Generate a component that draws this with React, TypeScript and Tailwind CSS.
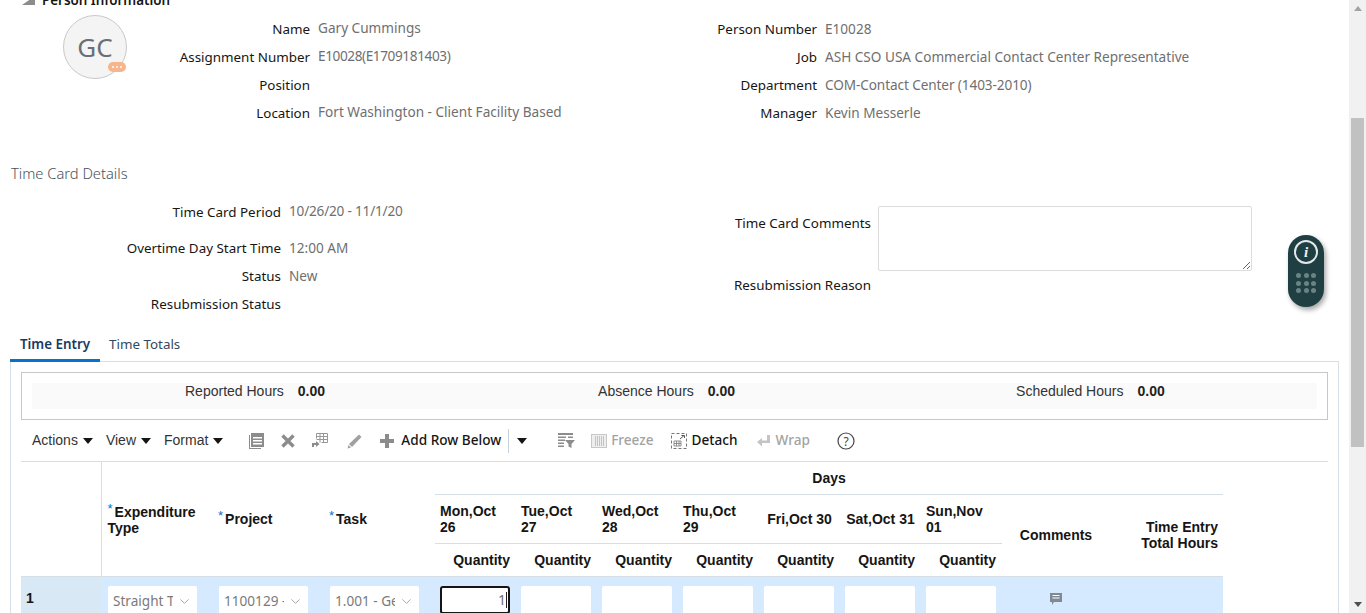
import { ChevronDown } from 'lucide-react';

const ui = { fontFamily: '"Noto Sans", "Open Sans", sans-serif' };
const arial = { fontFamily: '"Liberation Sans", Arial, sans-serif' };

const personRows = [
  ['Name', 'Gary Cummings', '', 'Person Number', 'E10028', ''],
  ['Assignment Number', 'E10028(E1709181403)', 'tracking-[-0.4px]', 'Job', 'ASH CSO USA Commercial Contact Center Representative', ''],
  ['Position', '', '', 'Department', 'COM-Contact Center (1403-2010)', 'tracking-[-0.1px]'],
  ['Location', 'Fort Washington - Client Facility Based', '', 'Manager', 'Kevin Messerle', ''],
];

const days = [
  ['Mon,Oct', '26'],
  ['Tue,Oct', '27'],
  ['Wed,Oct', '28'],
  ['Thu,Oct', '29'],
  ['Fri,Oct 30'],
  ['Sat,Oct 31'],
  ['Sun,Nov', '01'],
];

function Caret({ className = '' }: { className?: string }) {
  return (
    <svg width="10" height="6" viewBox="0 0 10 6" className={className}>
      <path d="M0 0h10L5 6z" fill="#161513" />
    </svg>
  );
}

function Menu({ label }: { label: string }) {
  return (
    <span className="flex items-center gap-[5px] text-[14px] text-[#333]" style={arial}>
      {label}
      <Caret />
    </span>
  );
}

function Pair({ label, value }: { label: string; value: string }) {
  return (
    <span className="flex items-center gap-[14px] text-[14px] text-[#333]" style={arial}>
      {label}
      <b className="text-[#222]">{value}</b>
    </span>
  );
}

function Star() {
  return <span className="relative -top-[4px] mr-[2px] text-[13px] font-normal leading-none text-[#0572ce]">*</span>;
}

function SelectBox({ text }: { text: string }) {
  return (
    <div className="flex h-[32px] w-[89px] items-center justify-between overflow-hidden rounded-[2px] bg-white pl-[5px] pr-[5px] text-[13.6px] font-normal text-[#7a7a7a]" style={ui}>
      <span className="w-[60px] overflow-hidden whitespace-nowrap">{text}</span>
      <ChevronDown size={15} strokeWidth={1.2} className="shrink-0 text-[#8a8a8a]" />
    </div>
  );
}

function ToolbarIcons() {
  return (
    <div className="ml-[25px] flex items-center">
      <svg width="16" height="16" viewBox="0 0 16 16" className="mr-[16px]">
        <path d="M1 2h1v13h11v1H1z M3 0h13v14H3z" fill="#8c8c8c" />
        <path d="M5 4h9v1.4H5zM5 7h9v1.4H5zM5 10h9v1.4H5z" fill="#fff" />
      </svg>
      <svg width="16" height="16" viewBox="0 0 16 16" className="mr-[15px]">
        <path d="M2.5 2.500l11 11M13.500 2.500l-11 11" stroke="#8c8c8c" strokeWidth="3.400" />
      </svg>
      <svg width="17" height="17" viewBox="0 0 17 17" className="mr-[18px]">
        <path d="M5.500 1.500h11v9h-6M5.500 1.500v5M9 1.500v9M12.500 1.500v9M5.500 4.500h11M5.500 7.500h11" stroke="#999" strokeWidth="1" fill="none" />
        <path d="M1 15v-4h4v-2l3.500 3L5 15v-2H3v2z" fill="#8c8c8c" />
      </svg>
      <svg width="18" height="18" viewBox="0 0 18 18" className="mr-[16px]">
        <path d="M3 12L13 2.500l2.500 2.500L6 15z" fill="#a0a0a0" />
        <path d="M1.500 16.500l1-3.500 2.500 2.500z" fill="#a0a0a0" />
      </svg>
      <svg width="14" height="14" viewBox="0 0 14 14" className="mr-[7px]">
        <path d="M5 0h4v5h5v4H9v5H5V9H0V5h5z" fill="#8c8c8c" />
      </svg>
      <span className="text-[13.6px] font-medium text-[#161513]" style={ui}>Add Row Below</span>
      <span className="ml-[7px] h-[24px] w-px bg-[#c9d3dc]" />
      <Caret className="ml-[8px] mr-[31px]" />
      <svg width="17" height="15" viewBox="0 0 17 15" className="mr-[16px]">
        <path d="M0 0h15v2H0zM0 3.500h8v1.500H0zM0 6.500h7v1.500H0zM0 9.500h6v1.500H0zM0 12.500h6V14H0zM10 3.500h5v1.500h-5z" fill="#8c8c8c" />
        <path d="M7 7h10l-3.500 4v4l-3-1.500V11z" fill="#8c8c8c" />
      </svg>
      <svg width="16" height="14" viewBox="0 0 16 14" className="mr-[4px]">
        <rect x="0.500" y="0.500" width="15" height="13" fill="#eee" stroke="#c8c8c8" />
        <path d="M4.500 2v10M6.500 2v10M8.500 2v10M10.500 2v10M12.500 2v10" stroke="#c4c4c4" />
      </svg>
      <span className="text-[13.6px] font-medium text-[#a3a3a3]" style={ui}>Freeze</span>
      <svg width="16" height="16" viewBox="0 0 16 16" className="ml-[17px] mr-[5px]">
        <rect x="0.500" y="0.500" width="15" height="15" fill="none" stroke="#777" strokeDasharray="3 2" />
        <path d="M3 8h7v5H3zM3 10.500h7M5.500 8v5M8 8v5" fill="none" stroke="#777" strokeWidth="0.800" />
        <path d="M9 6l4-3.500M10.500 2.500H13.500V5" fill="none" stroke="#555" />
      </svg>
      <span className="text-[13.6px] font-medium text-[#161513]" style={ui}>Detach</span>
      <svg width="14" height="14" viewBox="0 0 14 14" className="ml-[19px] mr-[5px]">
        <path d="M10 1h3v8H5v3.500L0 8l5-4v2.500h5z" fill="#c4c4c4" />
      </svg>
      <span className="text-[13.6px] font-medium text-[#a3a3a3]" style={ui}>Wrap</span>
      <svg width="18" height="18" viewBox="0 0 18 18" className="ml-[27px]">
        <circle cx="9" cy="9" r="8" fill="none" stroke="#444" strokeWidth="1.200" />
        <text x="9" y="13.500" textAnchor="middle" fontSize="12" fill="#444" style={ui}>?</text>
      </svg>
    </div>
  );
}

function FloatingHelp() {
  return (
    <div className="absolute left-[1288px] top-[235px] flex h-[72px] w-[36px] flex-col items-center rounded-full bg-[#1f3f43] pt-[5px] shadow-[2px_3px_5px_rgba(0,0,0,0.35)]">
      <div className="flex h-[24px] w-[24px] items-center justify-center rounded-full border-2 border-[#e4e8e8] text-[15px] font-bold italic leading-none text-[#f0f2f2]" style={{ fontFamily: '"Liberation Serif", serif' }}>
        i
      </div>
      <div className="mt-[9px] grid grid-cols-3 gap-x-[2.500px] gap-y-[2.500px]">
        {Array.from({ length: 9 }).map((_, i) => (
          <span key={i} className="h-[5px] w-[5px] rounded-full bg-[#6b8285]" />
        ))}
      </div>
    </div>
  );
}

function Scrollbar() {
  return (
    <div className="flex w-[17px] shrink-0 flex-col items-center bg-[#f1f1f1]">
      <div className="flex h-[17px] w-full shrink-0 items-center justify-center">
        <span className="h-0 w-0 border-x-[4px] border-b-[5px] border-x-transparent border-b-[#a3a3a3]" />
      </div>
      <div className="mt-[101px] h-[329px] w-[13px] shrink-0 bg-[#c1c1c1]" />
      <div className="mt-auto flex h-[17px] w-full shrink-0 items-center justify-center">
        <span className="h-0 w-0 border-x-[4px] border-t-[5px] border-x-transparent border-t-[#505050]" />
      </div>
    </div>
  );
}

export default function App() {
  return (
    <div className="relative flex h-[613px] w-[1366px] overflow-hidden bg-white">
      <div className="w-[1349px] shrink-0">
        {/* Person information */}
        <div className="-mt-[11px] flex h-[22px] items-center pl-[22px] text-[13.4px] font-semibold text-[#161513]" style={ui}>
          <span className="mr-[7px] h-0 w-0 border-b-[9px] border-l-[13px] border-b-[#8c8c8c] border-l-transparent" />
          Person Information
        </div>
        <div className="relative mt-[4px] grid grid-cols-[310px_400px_107px_1fr]" style={ui}>
          <div className="absolute left-[63px] top-0 flex h-[64px] w-[64px] items-center justify-center rounded-full border border-[#c9c9c9] bg-[#f4f4f4] text-[26px] text-[#6a6f76]">
            GC
            <span className="absolute bottom-[6px] right-0 flex h-[10px] w-[18px] items-center justify-center gap-[2px] rounded-full bg-[#f8b48a]">
              <i className="h-[2px] w-[2px] rounded-full bg-white" />
              <i className="h-[2px] w-[2px] rounded-full bg-white" />
              <i className="h-[2px] w-[2px] rounded-full bg-white" />
            </span>
          </div>
          {personRows.map((row) => (
            <div key={row[0]} className="contents">
              <div className="flex h-[28px] items-center justify-end text-[13.4px] text-[#161513]">{row[0]}</div>
              <div className={`flex h-[28px] items-center pb-[1px] pl-[8px] text-[13.6px] text-[#6f6f6f] ${row[2]}`}>{row[1]}</div>
              <div className="flex h-[28px] items-center justify-end text-[13.4px] text-[#161513]">{row[3]}</div>
              <div className={`flex h-[28px] items-center pl-[8px] text-[13.6px] text-[#6f6f6f] ${row[5]}`}>{row[4]}</div>
            </div>
          ))}
        </div>

        {/* Time card details */}
        <h2 className="ml-[11px] mt-[35px] text-[14.7px] font-light leading-[22px] text-[#46525c]" style={ui}>Time Card Details</h2>
        <div className="mt-[14px] grid grid-cols-[281px_590px_1fr]" style={ui}>
          <div className="text-right text-[13.4px] font-normal text-[#161513]">
            <div className="flex h-[28px] items-center justify-end">Time Card Period</div>
            <div className="mt-[8px] flex h-[28px] items-center justify-end">Overtime Day Start Time</div>
            <div className="flex h-[28px] items-center justify-end">Status</div>
            <div className="flex h-[28px] items-center justify-end">Resubmission Status</div>
          </div>
          <div className="relative text-[13.6px] text-[#6f6f6f]">
            <div className="flex h-[28px] items-center pb-[2px] pl-[8px] tracking-[-0.2px]">10/26/20 - 11/1/20</div>
            <div className="mt-[8px] flex h-[28px] items-center pl-[8px]">12:00 AM</div>
            <div className="flex h-[28px] items-center pl-[8px]">New</div>
            <div className="absolute right-0 top-[11px] flex flex-col items-end text-[13.4px] text-[#161513]">
              <span className="leading-[28px]">Time Card Comments</span>
              <span className="mt-[34px] leading-[28px]">Resubmission Reason</span>
            </div>
          </div>
          <div className="pl-[7px]">
            <textarea readOnly className="mt-[8px] block h-[65px] w-[374px] rounded-[2px] border border-[#dcdcdc] bg-white" />
          </div>
        </div>

        {/* Tabs */}
        <div className="ml-[10px] mt-[9px] flex h-[35px] text-[13.4px]" style={ui}>
          <div className="flex w-[90px] items-center justify-center border-b-[3px] border-[#0572ce] pt-[2px] font-semibold text-[#1a3a5c]">Time Entry</div>
          <div className="ml-[9px] flex items-center pb-[1px] text-[#2f4a60]">Time Totals</div>
        </div>

        {/* Panel */}
        <div className="-mt-px ml-[10px] w-[1329px] border-x border-t border-[#d6dfe6] px-[10px] pt-[10px]">
          <div className="h-[48px] border border-[#c8c8c8] px-[10px] py-[10px]">
            <div className="h-[26px] bg-[#fafafa]">
              <div className="flex h-[16px] items-center">
                <div className="ml-[153px]"><Pair label="Reported Hours" value="0.00" /></div>
                <div className="ml-[273px]"><Pair label="Absence Hours" value="0.00" /></div>
                <div className="ml-[281px]"><Pair label="Scheduled Hours" value="0.00" /></div>
              </div>
            </div>
          </div>

          <div className="flex h-[42px] items-center border-b border-[#d6dfe6] pl-[11px]">
            <div className="flex gap-[13px]">
              <Menu label="Actions" />
              <Menu label="View" />
              <Menu label="Format" />
            </div>
            <ToolbarIcons />
          </div>

          <table className="w-[1202px] table-fixed border-collapse text-[14px] font-bold text-[#161513]" style={arial}>
            <colgroup>
              <col className="w-[80px]" />
              <col className="w-[111px]" />
              <col className="w-[111px]" />
              <col className="w-[112px]" />
              <col className="w-[81px]" span={7} />
              <col className="w-[110px]" />
              <col className="w-[111px]" />
            </colgroup>
            <thead>
              <tr className="h-[32px]">
                <th rowSpan={3} className="border-r border-[#d6dfe6]" />
                <th rowSpan={3} className="px-[6px] pt-[2px] text-left font-bold leading-[16px]">
                  <Star />Expenditure<br />Type
                </th>
                <th rowSpan={3} className="px-[6px] pt-[2px] text-left font-bold">
                  <Star />Project
                </th>
                <th rowSpan={3} className="px-[6px] pt-[2px] text-left font-bold">
                  <Star />Task
                </th>
                <th colSpan={9} className="border-b border-[#d6dfe6] pt-[1px] text-center font-bold">Days</th>
              </tr>
              <tr className="h-[49px]">
                {days.map((d) => (
                  <th key={d[0]} className="whitespace-nowrap border-b border-[#d6dfe6] px-[5px] text-left font-bold leading-[16px]">
                    {d[1] ? <>{d[0]}<br />{d[1]}</> : <span className="-mx-[1px] block text-center">{d[0]}</span>}
                  </th>
                ))}
                <th rowSpan={2} className="pr-[2px] text-center font-bold">Comments</th>
                <th rowSpan={2} className="pr-[5px] text-right font-bold leading-[16px]">Time Entry<br />Total Hours</th>
              </tr>
              <tr className="h-[33px]">
                {days.map((d) => (
                  <th key={d[0]} className="pr-[6px] pt-[2px] text-right font-bold">Quantity</th>
                ))}
              </tr>
            </thead>
            <tbody>
              <tr className="h-[60px] border-t border-[#d6dfe6] bg-[#d6eaff]">
                <td className="bg-[#d9e8f5] px-[5px] pb-[16px] align-middle font-bold">1</td>
                <td className="pl-[7px] pt-[9px] align-top"><SelectBox text="Straight Time" /></td>
                <td className="pl-[7px] pt-[9px] align-top"><SelectBox text="1100129 - Ge" /></td>
                <td className="pl-[7px] pt-[9px] align-top"><SelectBox text="1.001 - General" /></td>
                {days.map((d, i) => (
                  <td key={d[0]} className="pl-[5px] pt-[9px] align-top">
                    {i === 0 ? (
                      <div className="flex h-[28px] w-[70px] items-center justify-end rounded-[3px] border-2 border-[#161513] bg-white pr-[1px] text-[14px] font-normal text-[#6f6f6f]" style={ui}>
                        1<span className="h-[16px] w-px bg-[#222]" />
                      </div>
                    ) : (
                      <div className="h-[32px] w-[70px] rounded-[2px] bg-white" />
                    )}
                  </td>
                ))}
                <td className="pt-[15px] align-top">
                  <svg width="14" height="15" viewBox="0 0 14 15" className="ml-[47px]">
                    <path d="M1 1h12v9H5l-2 3v-3H1z" fill="#7f8a92" />
                    <path d="M3.500 3.500h7M3.500 6h7" stroke="#fff" />
                  </svg>
                </td>
                <td />
              </tr>
            </tbody>
          </table>
        </div>
      </div>
      <Scrollbar />
      <FloatingHelp />
    </div>
  );
}
